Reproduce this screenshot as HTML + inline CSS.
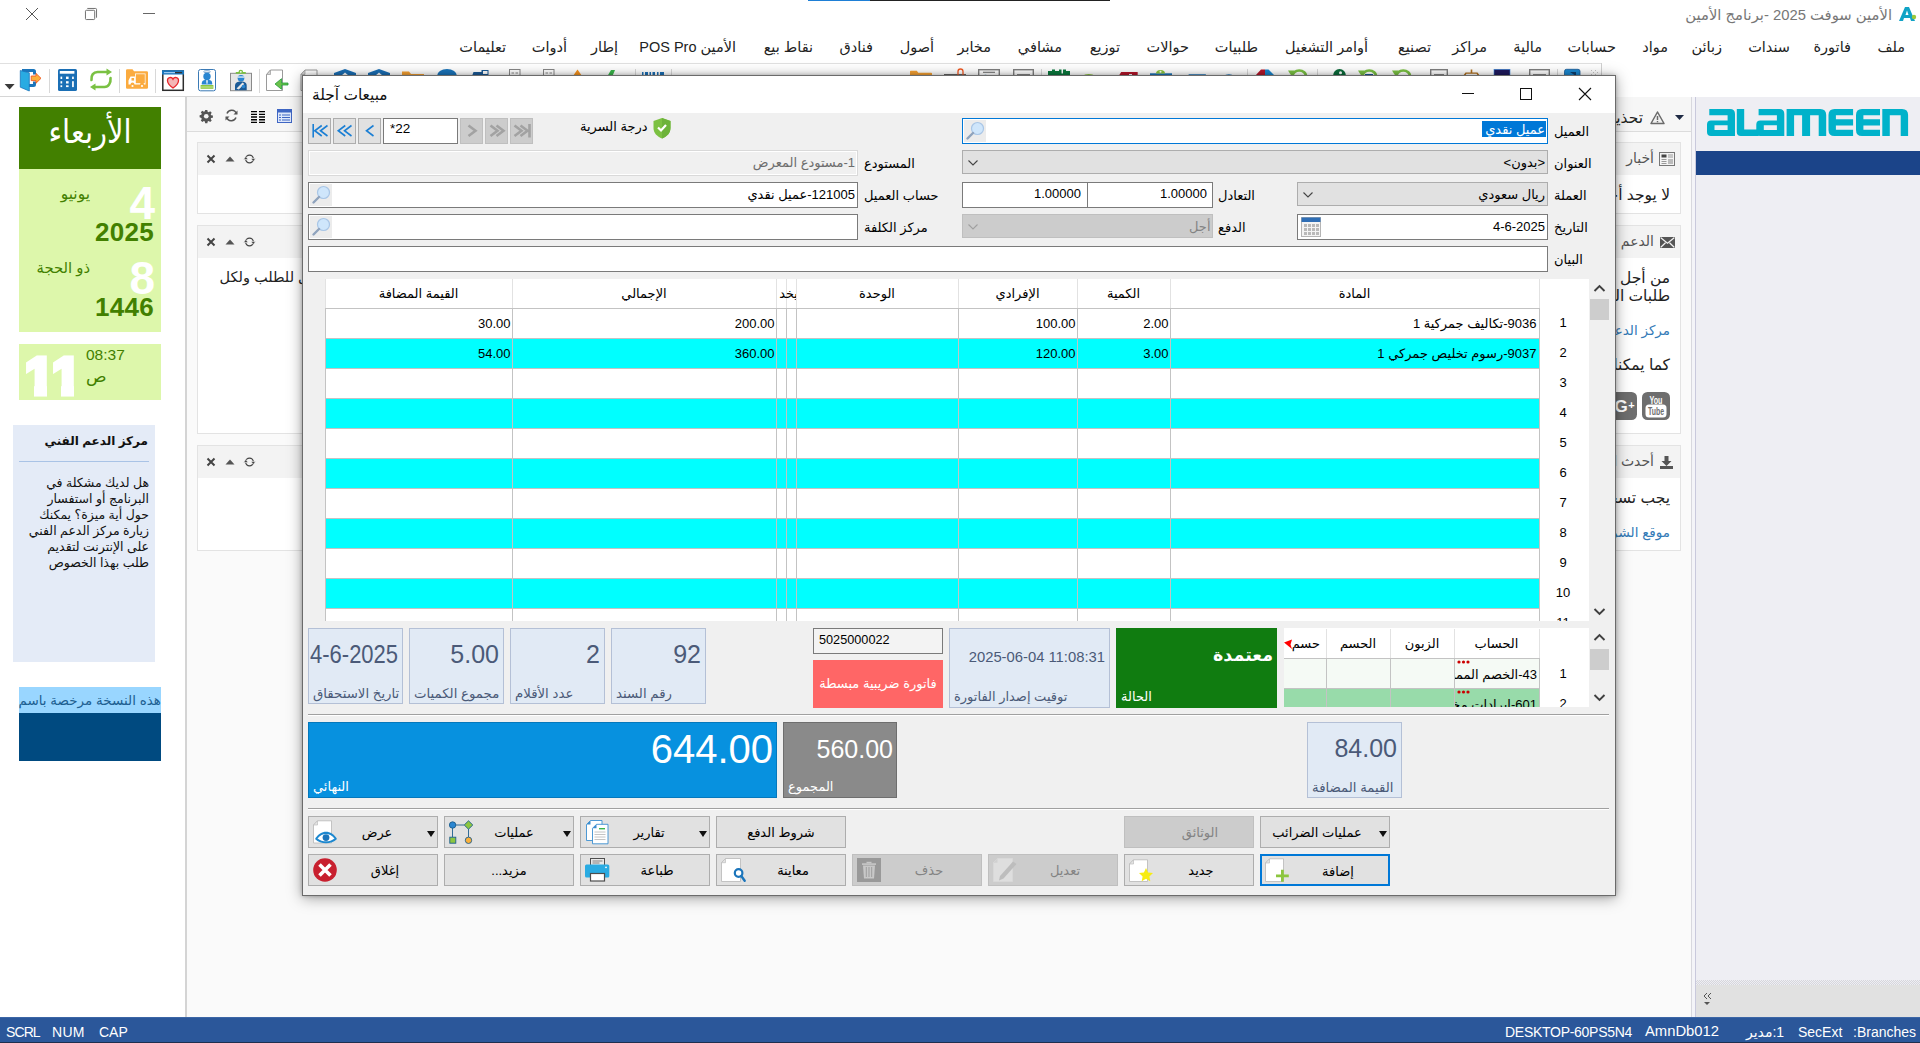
<!DOCTYPE html>
<html lang="ar">
<head>
<meta charset="utf-8">
<title>الأمين سوفت 2025 -برنامج الأمين</title>
<style>
*{box-sizing:border-box;margin:0;padding:0}
html,body{width:1920px;height:1043px;overflow:hidden;background:#fff}
body{position:relative;font-family:"Liberation Sans","DejaVu Sans",sans-serif;font-size:13px;color:#000}
.a{position:absolute}
.t{position:absolute;white-space:nowrap;line-height:1}
.r{direction:rtl;text-align:right}
.c{text-align:center}
svg{position:absolute;overflow:visible}
/* title + menu */
#title{left:0;top:0;width:1920px;height:30px;background:#fff}
#menu .t{font-size:14.5px;color:#222;top:40px;direction:rtl}
/* toolbar */
#tb{left:0;top:63px;width:1920px;height:35px;background:#fff;border-top:1px solid #e0e0e0;border-bottom:2px solid #d6d6d6}
.sep{position:absolute;top:69px;width:1px;height:24px;background:#d8d8d8}
/* left */
#left{left:0;top:97px;width:187px;height:921px;background:#fff;border-right:2px solid #d4d4d4}
/* center */
#center{left:187px;top:97px;width:1506px;height:921px;background:#fafafa}
.card{position:absolute;left:197px;width:1484px;background:#fff;border:1px solid #e3e3e3}
.card .h{position:absolute;left:0;top:0;right:0;height:32px;background:#f3f3f3}
/* right */
#right{left:1695px;top:97px;width:225px;height:921px;background:#eeeef3;border-left:1px solid #c9c9dc}
/* status */
#status{left:0;top:1017px;width:1920px;height:26px;background:#2b579a;border-top:1px solid #3c66a6}
#status .t{color:#fff;font-size:14px;top:7px}

#dlg{left:302px;top:75px;width:1314px;height:821px;background:#f0f0f0;border:1px solid #6b6b6b;box-shadow:0 2px 14px rgba(0,0,0,.36),0 0 4px rgba(0,0,0,.25)}
.in{position:absolute;background:#fff;border:1px solid #7a7a7a;height:26px}
.dis{position:absolute;background:#f0f0f0;border:1px solid #d9d9d9;box-shadow:inset 0 0 0 1px #fff;height:26px}
.cb{position:absolute;background:#e1e1e1;border:1px solid #adadad;height:24px}
.l{position:absolute;white-space:nowrap;line-height:1;font-size:13px;direction:rtl}
.v{position:absolute;white-space:nowrap;line-height:1;font-size:13px}
.btn{position:absolute;background:#e1e1e1;border:1px solid #adadad;height:32px;width:130px}
.btn .l{left:0;width:128px;text-align:center;top:9px;font-size:13px}
.btn.d{background:#cccccc;border-color:#bfbfbf}.btn.d .l{color:#838383}
.nb{position:absolute;top:118px;width:23px;height:26px;background:#e1e1e1;border:1px solid #adadad}
.nb.d{background:#cccccc;border-color:#bfbfbf}
.ib{position:absolute;background:#e1eaf5;border:1px solid #b4c0d6}
.gl{position:absolute;background:#c3c3c3;width:1px}
.hl{position:absolute;background:#c3c3c3;height:1px}

</style>
</head>
<body>
<!-- TITLE BAR -->
<div id="title" class="a">
  <div class="a" style="left:808px;top:0;width:62px;height:1px;background:#1e7fd6"></div>
  <div class="a" style="left:870px;top:0;width:240px;height:1px;background:#222"></div>
  <svg style="left:25px;top:7px" width="14" height="14" viewBox="0 0 14 14"><path d="M1 1L13 13M13 1L1 13" stroke="#555" stroke-width="1" fill="none"/></svg>
  <svg style="left:85px;top:8px" width="12" height="12" viewBox="0 0 13 13"><path d="M2.5 0.5h9a1 1 0 0 1 1 1v9M0.5 3.5a1 1 0 0 1 1-1h8a1 1 0 0 1 1 1v8a1 1 0 0 1-1 1h-8a1 1 0 0 1-1-1z" stroke="#666" stroke-width="1" fill="none"/></svg>
  <div class="a" style="left:143px;top:13px;width:12px;height:1px;background:#666"></div>
  <div class="t r" style="right:28px;top:8px;font-size:14.800px;color:#777">الأمين سوفت 2025 -برنامج الأمين</div>
  <svg style="left:1898px;top:6px" width="20" height="16" viewBox="0 0 20 16"><path d="M1 15L7 1h4l6 14h-4l-1-3H6l-1 3z" fill="#11a3c6"/><path d="M7.5 9h3L9 4.5z" fill="#fff"/><circle cx="16" cy="11" r="2.2" fill="#9bc83a"/></svg>
</div>
<!-- MENU BAR -->
<div id="menu">
  <div class="t" style="right:15px">ملف</div>
  <div class="t" style="right:69px">فاتورة</div>
  <div class="t" style="right:130px">سندات</div>
  <div class="t" style="right:198px">زبائن</div>
  <div class="t" style="right:252px">مواد</div>
  <div class="t" style="right:304px">حسابات</div>
  <div class="t" style="right:378px">مالية</div>
  <div class="t" style="right:433px">مراكز</div>
  <div class="t" style="right:489px">تصنيع</div>
  <div class="t" style="right:552px">أوامر التشغيل</div>
  <div class="t" style="right:662px">طلبيات</div>
  <div class="t" style="right:731px">حوالات</div>
  <div class="t" style="right:800px">توزيع</div>
  <div class="t" style="right:858px">مشافي</div>
  <div class="t" style="right:929px">مخابر</div>
  <div class="t" style="right:986px">أصول</div>
  <div class="t" style="right:1047px">فنادق</div>
  <div class="t" style="right:1107px">نقاط بيع</div>
  <div class="t" style="right:1184px">الأمين POS Pro</div>
  <div class="t" style="right:1302px">إطار</div>
  <div class="t" style="right:1353px">أدوات</div>
  <div class="t" style="right:1414px">تعليمات</div>
</div>
<!-- TOOLBAR -->
<div id="tb" class="a"></div>
<div class="a" style="left:1602px;top:62px;width:318px;height:36px;background:#fff"></div>
<div class="a" style="left:1601px;top:63px;width:1px;height:13px;background:#d0d0d0"></div>
<div class="sep" style="left:49px"></div><div class="sep" style="left:119px"></div><div class="sep" style="left:155px"></div><div class="sep" style="left:259px"></div>
<div class="sep" style="left:635px"></div><div class="sep" style="left:671px"></div><div class="sep" style="left:1041px"></div><div class="sep" style="left:1247px"></div><div class="sep" style="left:1317px"></div><div class="sep" style="left:1557px"></div>
<svg style="left:0;top:63px" width="1602" height="34" viewBox="0 63 1602 34">
<!-- dropdown -->
<path d="M4.600 84h10l-5 5.500z" fill="#3a3a3a"/>
<!-- door -->
<path d="M22 69h11.500a2.500 2.500 0 0 1 2.500 2.500v3h-3v-2.500h-8v12h8v-2.500h3v3a2.500 2.500 0 0 1-2.500 2.500h-11.500z" fill="#1b75bb"/>
<path d="M20.300 70.500l9 2.300v18.200l-9-3.800z" fill="#29abe2" stroke="#1b75bb" stroke-width=".8"/>
<path d="M31.200 76h4.800v-2.600l5 4.900-5 4.900v-2.600h-4.800z" fill="#fbb03b" stroke="#f15a24" stroke-width=".9"/>
<!-- calculator -->
<rect x="58" y="69" width="19" height="22" rx="1.600" fill="#1b6fb5"/>
<rect x="59.800" y="71" width="14.600" height="2.700" fill="#fff"/>
<g fill="#fff"><rect x="60.500" y="76.600" width="1.700" height="2.400"/><rect x="66" y="76.600" width="2.600" height="2.400"/><rect x="72.100" y="76.600" width="1.700" height="2.400"/><rect x="60.500" y="81.200" width="1.700" height="2.300"/><rect x="66" y="81.200" width="2.600" height="2.300"/><rect x="72.100" y="81.200" width="1.700" height="5.900"/><rect x="60.500" y="85.300" width="1.700" height="1.800"/><rect x="66" y="85.300" width="2.600" height="1.800"/></g>
<!-- refresh -->
<g fill="none" stroke="#7ac143" stroke-width="2.600" stroke-linecap="round"><path d="M91.500 80c-.5-5 2-8 6-8h10"/><path d="M110.500 78c.5 5-2 9-6 9h-10"/></g>
<path d="M106.500 68.500l5.500 3.500-5.500 3.500z" fill="#7ac143"/><path d="M95.500 83.500l-5.500 3.500 5.500 3.500z" fill="#7ac143"/>
<!-- folder truck -->
<path d="M126 70.500a1.200 1.200 0 0 1 1.200-1.200h5.300l1.500 2h12.800a1.200 1.200 0 0 1 1.200 1.200v15a1.200 1.200 0 0 1-1.200 1.200h-19.600a1.200 1.200 0 0 1-1.200-1.200z" fill="#fbab3f"/>
<path d="M128.500 84.500v-4l2-4h4.500v-3h10.500v11h-1.500a2 2 0 0 0-4 0h-5.500a2 2 0 0 0-4 0z" fill="#fff"/>
<rect x="135.800" y="74.200" width="9" height="9" fill="#fbab3f"/><rect x="131.500" y="78" width="2.600" height="2.600" fill="#fbab3f"/><path d="M129.300 84v-3.300l1.600-3.400h4v6.700z" fill="#fbab3f" opacity=".0"/>
<circle cx="132.500" cy="86" r="1.100" fill="#fff"/><circle cx="142" cy="86" r="1.100" fill="#fff"/>
<!-- heart window -->
<rect x="162.800" y="71" width="20.500" height="19.300" fill="#fff" stroke="#2d2d2d" stroke-width="1.500"/>
<rect x="162" y="70.200" width="22" height="4.300" fill="#1b75bb"/><rect x="164" y="72" width="11" height="1.200" fill="#9cc8ee"/><rect x="175" y="72" width="7" height="1.200" fill="#333"/>
<path d="M173 88c-3-2.200-5.500-4.500-5.500-7.300a2.900 2.900 0 0 1 5.500-1.500 2.900 2.900 0 0 1 5.500 1.500c0 2.800-2.500 5.100-5.500 7.300z" fill="#f4b6b6" stroke="#e8262b" stroke-width="1.300"/>
<!-- person badge -->
<rect x="198.500" y="69.500" width="17" height="21.300" rx="2" fill="#fff" stroke="#3b7ab5" stroke-width="1"/>
<ellipse cx="207" cy="71.700" rx="3.300" ry="1" fill="none" stroke="#3b7ab5" stroke-width=".7"/>
<circle cx="207" cy="76.500" r="3.700" fill="#2a86d1"/>
<path d="M201.800 84.600v-1.300c0-2.200 1.600-3.300 3.200-3.300h4c1.600 0 3.200 1.100 3.200 3.300v1.300z" fill="#2a86d1"/><path d="M206.200 80.200h1.600l-.3 3.600h-1z" fill="#fff"/>
<rect x="200.600" y="85" width="12.800" height="3.800" fill="#8cc63f"/><rect x="200.600" y="86.600" width="12.800" height=".8" fill="#d8efb5"/>
<!-- clipboard -->
<rect x="230.500" y="73.300" width="21" height="17.400" fill="#e6e6e6" stroke="#8a8a8a" stroke-width="1"/>
<path d="M235.800 73.700v-1.700h2.700a2.300 2.300 0 0 1 4.600 0h2.700v1.700z" fill="#7ac143"/><circle cx="240.800" cy="71.800" r=".9" fill="#fff"/>
<circle cx="241" cy="78.200" r="3.300" fill="#2a86d1"/><rect x="237.700" y="76.300" width="6.600" height="1.500" fill="#cfe3f5"/>
<path d="M235 90.300v-4.500c0-3 2.500-4.300 6-4.300s5.700 1.300 5.700 4.300v4.500z" fill="#1b5a96"/><path d="M236.500 88.500l6-6 1.800 1.500-5.500 5.500z" fill="#e6e6e6"/><circle cx="243.500" cy="86.500" r="1.800" fill="#2a86d1"/>
<!-- page + arrow -->
<path d="M270.500 70h12v20.500h-16v-16z" fill="#fff" stroke="#9a9a9a" stroke-width="1"/><path d="M270.500 70v4.500h-4z" fill="#d5d5d5" stroke="#9a9a9a" stroke-width=".7"/>
<path d="M275 84l6.500-5.300v4.300h6.500v2h-6.500v4.300z" fill="#6cc04a" stroke="#1f9d3a" stroke-width=".8"/>
<!-- next page (cut) -->
<path d="M305 70h12v20.500h-16v-16z" fill="#fff" stroke="#9a9a9a" stroke-width="1"/><path d="M305 70v4.500h-4z" fill="#d5d5d5" stroke="#9a9a9a" stroke-width=".7"/>
<!-- slivers above dialog -->
<path d="M334 76v-3l11-4 11 4v3z" fill="#1b6fb5"/><path d="M341 76l4-3.500 4 3.500z" fill="#fff"/>
<path d="M368 76v-3l11-4 11 4v3z" fill="#1b6fb5"/><path d="M375 76l4-3.500 4 3.500z" fill="#fff"/>
<path d="M402 76v-4.500h7l2 2.500h13v2z" fill="#f7a233"/>
<path d="M437 76a10 7 0 0 1 20 0z" fill="#1b75bb"/>
<path d="M472 76l1.500-4h8v-2h7v6z" fill="#1b5a96"/><rect x="483" y="71" width="4.500" height="3" fill="#fff"/>
<rect x="509.500" y="69.500" width="10.500" height="8" fill="#fff" stroke="#888" stroke-width="1"/><rect x="511.500" y="72.500" width="2.500" height="1" fill="#888"/><rect x="515.500" y="72.500" width="2.500" height="1" fill="#888"/>
<rect x="543.500" y="69.500" width="10.500" height="8" fill="#fff" stroke="#888" stroke-width="1"/><rect x="545.500" y="72.500" width="2.500" height="1" fill="#888"/><rect x="549.500" y="72.500" width="2.500" height="1" fill="#888"/>
<path d="M577.500 69.500l4.500 6.500h-9z" fill="#f7931e"/>
<path d="M611 70h4l-2.500 6h-5z" fill="#39b54a"/>
<g fill="#1b6fb5"><rect x="642" y="72" width="1.500" height="4"/><rect x="645" y="72" width="3" height="4"/><rect x="649.500" y="72" width="1.500" height="4"/><rect x="652.500" y="72" width="2.500" height="4"/><rect x="657" y="72" width="1.500" height="4"/><rect x="660" y="72" width="4" height="4"/></g>
<path d="M910 76v-4.500a.8 .8 0 0 1 .8-.8h6l1.500 2h12.900a.8 .8 0 0 1 .8 .8v2.500z" fill="#f7a233"/>
<rect x="944" y="74" width="22" height="2" fill="#666"/><path d="M958 76v-4.500a2.500 2.500 0 0 1 5 0v4.500" fill="none" stroke="#f15a24" stroke-width="1.300"/>
<rect x="978.700" y="69.700" width="20.600" height="8" fill="#fff" stroke="#808080" stroke-width="1.400"/><rect x="983" y="71.700" width="12" height="1.300" fill="#888"/><path d="M983 76a3 3 0 0 1 5 0z" fill="#1b75bb"/>
<rect x="1013.700" y="69.700" width="19.600" height="8" fill="#fff" stroke="#808080" stroke-width="1.400"/><rect x="1017" y="74" width="13" height="2" fill="#888"/>
<path d="M1048 76v-5h4v-1.500h3v1.500h4v-1.500h2.500v4h1.500v-4h3v1.500h4v5z" fill="#0b7a3e"/>
<path d="M1082.500 76a7 3.500 0 0 1 12.500 0z" fill="#8cc63f"/>
<path d="M1118.700 76l2.500-4h16.500v4z" fill="#b5172b"/><rect x="1129" y="74" width="3" height="2" fill="#fff"/>
<rect x="1150" y="73.300" width="22" height="3" fill="#1b75bb"/><path d="M1156 73.500a4.500 3.500 0 0 1 9 0z" fill="#8cc63f"/><circle cx="1160.500" cy="71.800" r="1" fill="#fff"/>
<path d="M1188 76l.8-1.800h17l.2 1.800z" fill="#1b75bb"/>
<path d="M1223.700 76a6 3.500 0 0 1 10.300 0z" fill="#1b75bb"/>
<path d="M1255 76l6-6.500h4v6.500z" fill="#b5172b"/><path d="M1265 69.500h3.500l6.500 6.500h-10z" fill="#1b87cf"/>
<path d="M1291 76a8 6.500 0 0 1 16.500 0h-3a5 4 0 0 0-10.500 0z" fill="#7ac143"/><path d="M1288 70.500l6.500 0-3 5.500z" fill="#7ac143"/>
<path d="M1333 76a6.500 7 0 0 1 13 0z" fill="#0b6b3a"/><circle cx="1340.500" cy="72.800" r="1.500" fill="#fff"/>
<path d="M1361 76a8 6.500 0 0 1 16.500 0h-3a5 4 0 0 0-10.500 0z" fill="#7ac143"/><path d="M1358 70.500l6.500 0-3 5.500z" fill="#7ac143"/><rect x="1365" y="74" width="8" height="2" fill="#1b5a96"/>
<path d="M1395 76a8 6.500 0 0 1 16.500 0h-3a5 4 0 0 0-10.500 0z" fill="#7ac143"/><path d="M1392 70.500l6.500 0-3 5.500z" fill="#7ac143"/>
<rect x="1430.700" y="69.700" width="16.600" height="8" fill="#fff" stroke="#808080" stroke-width="1.400"/><rect x="1434" y="74" width="10" height="2" fill="#888"/>
<path d="M1463 76l2.500-3.500h5.200v-3h1.600v3h5.200l2.500 3.500h-2l-1.500-2.300h-10l-1.500 2.300z" fill="#b0701f"/>
<rect x="1494" y="69.300" width="16" height="7" fill="#1f1a5e" stroke="#3c8de0" stroke-width=".6"/>
<rect x="1529.700" y="69.700" width="19.600" height="8" fill="#fff" stroke="#808080" stroke-width="1.400"/><rect x="1533" y="74" width="13" height="2" fill="#888"/>
<rect x="1564.500" y="69.300" width="15.500" height="8" rx="2" fill="#1b87cf" stroke="#1b5a96" stroke-width=".8"/><path d="M1570 72h6v4z" fill="#0d3e6e"/>
<g fill="#c4c4c4"><rect x="1591" y="70" width="1" height="1"/><rect x="1595" y="70" width="1" height="1"/><rect x="1593" y="72" width="1" height="1"/><rect x="1597" y="72" width="1" height="1"/><rect x="1591" y="74" width="1" height="1"/><rect x="1595" y="74" width="1" height="1"/></g>
</svg>

<!-- LEFT PANEL -->
<div id="left" class="a"></div>
<div class="a" style="left:19px;top:107px;width:142px;height:62px;background:#428000"></div>
<div class="t c" style="left:19px;top:118px;width:142px;font-size:29px;transform:scaleY(1.120);color:#fff;font-family:'Liberation Serif','DejaVu Serif','DejaVu Sans',serif;direction:rtl">الأربعاء</div>
<div class="a" style="left:19px;top:169px;width:142px;height:163px;background:#ddf7ab"></div>
<div class="t" style="right:1765px;top:180px;font-size:46px;font-weight:bold;color:#fff">4</div>
<div class="t r" style="right:1830px;top:186px;font-size:15.500px;color:#428000">يونيو</div>
<div class="t" style="right:1766px;top:219px;font-size:26px;font-weight:bold;color:#428000;letter-spacing:.3px">2025</div>
<div class="t" style="right:1765px;top:255px;font-size:46px;font-weight:bold;color:#fff">8</div>
<div class="t r" style="right:1830px;top:261px;font-size:14.800px;color:#428000">ذو الحجة</div>
<div class="t" style="right:1766px;top:294px;font-size:26px;font-weight:bold;color:#428000;letter-spacing:.3px">1446</div>
<div class="a" style="left:19px;top:344px;width:142px;height:56px;background:#ddf7ab"></div>
<div class="t" style="left:24.900px;top:349.600px;font-size:52px;font-weight:bold;color:#fff;letter-spacing:-1.800px;font-kerning:none;-webkit-text-stroke:5px #fff">11</div><div class="a" style="left:19px;top:385px;width:15px;height:13px;background:#ddf7ab"></div><div class="a" style="left:47px;top:385px;width:14px;height:13px;background:#ddf7ab"></div><div class="a" style="left:74px;top:385px;width:26px;height:13px;background:#ddf7ab"></div>
<div class="t" style="left:86px;top:347px;font-size:15.5px;color:#428000">08:37</div>
<div class="t r" style="left:86px;top:368px;font-size:17px;color:#428000">ص</div>
<div class="a" style="left:13px;top:425px;width:142px;height:237px;background:#e4ebf7"></div>
<div class="t r" style="right:1772px;top:435px;font-size:12px;font-weight:bold;color:#111">مركز الدعم الفني</div>
<div class="a" style="left:19px;top:461px;width:130px;height:1px;background:#a9c3e6"></div>
<div class="a r" style="left:19px;top:475px;width:130px;font-size:12.5px;line-height:16px;color:#111">هل لديك مشكلة في<br>البرنامج أو استفسار<br>حول أية ميزة؟ يمكنك<br>زيارة مركز الدعم الفني<br>على الإنترنت لتقديم<br>طلب بهذا الخصوص</div>
<div class="a" style="left:19px;top:687px;width:142px;height:26px;background:#99d6ff;overflow:hidden"><div class="t r" style="right:0px;top:7px;font-size:13.5px;color:#1d5f91">هذه النسخة مرخصة باسم</div></div>
<div class="a" style="left:19px;top:713px;width:142px;height:48px;background:#004a80"></div>

<!-- CENTER -->
<div id="center" class="a"></div>
<div class="a" style="left:187px;top:97px;width:1506px;height:35px;background:#f6f6f6;border-bottom:1px solid #dcdcdc"></div>

<!-- header icons -->
<svg style="left:200px;top:110px" width="12.500" height="12.500" viewBox="0 0 16 16"><path fill="#555" d="M6.600 0h2.800l.4 2.200 1.300.6 1.900-1.300 2 2-1.300 1.900.6 1.300 2.200.4v2.800l-2.200.4-.6 1.300 1.300 1.900-2 2-1.900-1.300-1.300.6-.4 2.200h-2.800l-.4-2.200-1.300-.6-1.900 1.300-2-2 1.300-1.900-.6-1.300L-.5 9.400v-2.800l2.200-.4.600-1.300L1 3l2-2 1.900 1.300 1.300-.6z"/><circle cx="8" cy="8" r="3" fill="#f6f6f6"/></svg>
<svg style="left:225px;top:109px" width="13" height="13" viewBox="0 0 13 13"><path d="M11.500 5A5 5 0 0 0 2 4.500M1.500 8A5 5 0 0 0 11 8.500" stroke="#555" stroke-width="1.500" fill="none"/><path d="M12.500 1.500v4h-4zM.5 11.500v-4h4z" fill="#555"/></svg>
<svg style="left:250.500px;top:110.500px" width="14" height="12" viewBox="0 0 14 12"><path d="M0 .6h6M8 .6h6M0 3.300h6M8 3.300h6M0 6h6M8 6h6M0 8.700h6M8 8.700h6M0 11.400h6M8 11.400h6" stroke="#000" stroke-width="1.350"/></svg>
<svg style="left:277px;top:109px" width="15" height="14" viewBox="0 0 15 14"><rect x=".5" y=".5" width="14" height="13" fill="#dfe8fb" stroke="#3f66c4"/><rect x=".5" y=".5" width="14" height="3" fill="#3f66c4"/><path d="M2 6h2M5 6h8M2 8.500h2M5 8.500h8M2 11h2M5 11h8" stroke="#3f66c4" stroke-width="1.200"/></svg>
<!-- cards -->
<div class="card" style="top:142px;height:72px"><div class="h"></div></div>
<div class="card" style="top:225px;height:209px"><div class="h"></div></div>
<div class="card" style="top:445px;height:106px"><div class="h"></div></div>
<div class="t r" style="left:219.500px;top:270px;font-size:14.500px;color:#222">أفضل للطلب ولكل</div>
<svg style="left:206px;top:154px" width="50" height="10" viewBox="0 0 50 10"><path d="M1.500 1.500l7 7M8.500 1.500l-7 7" stroke="#444" stroke-width="2"/><path d="M19.500 7.500l4.500-5 4.500 5z" fill="#555"/><circle cx="43.500" cy="5" r="3.800" fill="none" stroke="#444" stroke-width="1.300"/><path d="M37.500 5.500l2.300-3 2.300 3zM45 4.500l2.300 3 2.300-3z" fill="#444" stroke="#f3f3f3" stroke-width=".6"/></svg><svg style="left:206px;top:237px" width="50" height="10" viewBox="0 0 50 10"><path d="M1.500 1.500l7 7M8.500 1.500l-7 7" stroke="#444" stroke-width="2"/><path d="M19.500 7.500l4.500-5 4.500 5z" fill="#555"/><circle cx="43.500" cy="5" r="3.800" fill="none" stroke="#444" stroke-width="1.300"/><path d="M37.500 5.500l2.300-3 2.300 3zM45 4.500l2.300 3 2.300-3z" fill="#444" stroke="#f3f3f3" stroke-width=".6"/></svg><svg style="left:206px;top:457px" width="50" height="10" viewBox="0 0 50 10"><path d="M1.500 1.500l7 7M8.500 1.500l-7 7" stroke="#444" stroke-width="2"/><path d="M19.500 7.500l4.500-5 4.500 5z" fill="#555"/><circle cx="43.500" cy="5" r="3.800" fill="none" stroke="#444" stroke-width="1.300"/><path d="M37.500 5.500l2.300-3 2.300 3zM45 4.500l2.300 3 2.300-3z" fill="#444" stroke="#f3f3f3" stroke-width=".6"/></svg><div class="a" style="left:1660px;top:108px;width:0;height:0"></div>
<svg style="left:1675px;top:115px" width="9" height="5" viewBox="0 0 9 5"><path d="M0 0h9l-4.500 5z" fill="#1f2a44"/></svg>
<svg style="left:1650px;top:111px" width="15" height="13" viewBox="0 0 15 13"><path d="M7.500 1l6.500 11.500h-13z" fill="#f1f1f1" stroke="#6a6a6a" stroke-width="1.500" stroke-linejoin="round"/><path d="M7.500 5v4" stroke="#6a6a6a" stroke-width="1.500"/><rect x="6.800" y="10" width="1.400" height="1.300" fill="#6a6a6a"/></svg>
<div class="t r" style="right:277px;top:110px;font-size:15.5px;color:#222">تحذير</div>
<div class="a" style="left:1691px;top:97px;width:1px;height:921px;background:#d8d8de"></div>
<div class="a" style="left:1692px;top:97px;width:3px;height:921px;background:#f4f4f8"></div>
<!-- card contents (right side) -->
<svg style="left:1659px;top:152px" width="16" height="14" viewBox="0 0 16 14"><rect x=".5" y=".5" width="15" height="13" fill="#f3f3f3" stroke="#777" stroke-width="1"/><rect x="2.500" y="2.500" width="5" height="3" fill="#444"/><path d="M9 3h5M9 5h5M2.500 7.500h5M2.500 9.500h5M2.500 11.500h5" stroke="#999" stroke-width="1"/><rect x="9" y="7" width="5" height="5" fill="#bbb"/></svg>
<div class="t r" style="right:266px;top:151px;font-size:14px;color:#555">أخبار</div>
<div class="t r" style="right:250px;top:187px;font-size:15.500px;color:#222">لا يوجد أخبار جديدة</div>
<svg style="left:1660px;top:237px" width="15" height="11" viewBox="0 0 15 11"><rect width="15" height="11" rx="1" fill="#555"/><path d="M.8 .8l6.700 5.500 6.700-5.500M.8 10.200l4.700-4.500M14.200 10.200l-4.700-4.500" stroke="#f3f3f3" stroke-width="1.200" fill="none"/></svg>
<div class="t r" style="right:266px;top:234px;font-size:14px;color:#555">الدعم الفني</div>
<div class="t r" style="right:250px;top:270px;font-size:15.500px;color:#222">من أجل الحصول على</div>
<div class="t r" style="right:250px;top:288px;font-size:15.500px;color:#222">طلبات الدعم الفني</div>
<div class="t r" style="right:250px;top:324px;font-size:13.500px;color:#337ab7">مركز الدعم الفني</div>
<div class="t r" style="right:250px;top:357px;font-size:15.500px;color:#222">كما يمكنك متابعتنا</div>
<svg style="left:1642px;top:392px" width="28" height="28" viewBox="0 0 28 28"><rect width="28" height="28" rx="5.500" fill="#6e6e6e"/><rect x="3.500" y="12.500" width="21" height="13" rx="3.500" fill="#fff"/><text x="14" y="11.500" font-family="Liberation Sans, DejaVu Sans, sans-serif" font-size="11" font-weight="bold" fill="#fff" text-anchor="middle" textLength="13" lengthAdjust="spacingAndGlyphs">You</text><text x="14" y="23.300" font-family="Liberation Sans, DejaVu Sans, sans-serif" font-size="11" font-weight="bold" fill="#6e6e6e" text-anchor="middle" textLength="16" lengthAdjust="spacingAndGlyphs">Tube</text></svg>
<svg style="left:1609px;top:392px" width="28" height="28" viewBox="0 0 28 28"><rect width="28" height="28" rx="5.500" fill="#6e6e6e"/><text x="12" y="20" font-family="Liberation Sans, DejaVu Sans, sans-serif" font-size="17" font-weight="bold" fill="#fff" text-anchor="middle">G</text><text x="22.500" y="17" font-family="Liberation Sans, DejaVu Sans, sans-serif" font-size="11" font-weight="bold" fill="#fff" text-anchor="middle">+</text></svg>
<svg style="left:1660px;top:456px" width="13" height="13" viewBox="0 0 13 13"><path d="M4.500 0h4v5h3l-5 5-5-5h3z" fill="#555"/><rect x="0" y="10" width="13" height="3" fill="#555"/></svg>
<div class="t r" style="right:266px;top:454px;font-size:14px;color:#555">أحدث الإصدارات</div>
<div class="t r" style="right:250px;top:490px;font-size:15.500px;color:#222">يجب تسجيل الدخول</div>
<div class="t r" style="right:250px;top:526px;font-size:13.500px;color:#337ab7">موقع الشركة</div>

<!-- RIGHT -->
<div id="right" class="a"></div>
<div class="a" style="left:1696px;top:151px;width:224px;height:24px;background:#1b4489"></div>
<svg style="left:1707px;top:108.600px" width="202" height="28" viewBox="0 0 202 28"><g fill="#00b2ca"><path fill-rule="evenodd" d="M2.3 0H23Q28 0 28 5V27.100H4Q0 27.100 0 23.100V15.500Q0 11.500 4 11.500H20.6V6.300H2.3ZM7.5 16.300H20.6V21H7.5Z"/><path d="M29.800 0H37.200V20.600H51.600V27.100H33.800Q29.800 27.100 29.800 23.100Z"/><path fill-rule="evenodd" d="M51.599999999999994 0H72.3Q77.3 0 77.3 5V27.100H53.3Q49.3 27.100 49.3 23.100V15.500Q49.3 11.500 53.3 11.500H69.9V6.300H51.599999999999994ZM56.8 16.300H69.9V21H56.8Z"/><path d="M79.600 0H113.200Q119.200 0 119.200 6V27.100H111.700V6.300H103.100V27.100H95.100V6.300H87.100V27.100H79.600Z"/><path d="M146.1 0H127.5Q121.5 0 121.5 6V21.100Q121.5 27.100 127.5 27.100H146.1V20.800H128.9V16.600H146.1V10.300H128.9V6.300H146.1Z"/><path d="M173 0H155Q149 0 149 6V21.100Q149 27.100 155 27.100H173V20.800H156.4V16.600H173V10.300H156.4V6.300H173Z"/><path d="M175.300 0H195.100Q201.100 0 201.100 6V27.100H193.700V6.300H182.800V27.100H175.300Z"/></g></svg>
<div class="a" style="left:1696px;top:980px;width:224px;height:5px;background:repeating-conic-gradient(#d6d6dc 0% 25%,#eeeef3 0% 50%) 0 0/2px 2px"></div>
<div class="a" style="left:1696px;top:985px;width:224px;height:33px;background:#e1e1e1"></div>
<svg style="left:1703px;top:992px" width="9" height="14" viewBox="0 0 9 14"><path d="M4 1L1 4L4 7M8 1L5 4L8 7" stroke="#555" stroke-width="1" fill="none"/><path d="M1 10h6l-3 3z" fill="#555"/></svg>

<!-- STATUS -->
<div id="status" class="a">
  <div class="t" style="left:6px;letter-spacing:-.9px">SCRL</div>
  <div class="t" style="left:52px;letter-spacing:.3px">NUM</div>
  <div class="t" style="left:99px">CAP</div>
  <div class="t" style="left:1505px;letter-spacing:-.28px">DESKTOP-60PS5N4</div>
  <div class="t" style="left:1645px;font-size:14.800px;top:6px">AmnDb012</div>
  <div class="t" style="left:1746px;direction:rtl">1:مدير</div>
  <div class="t" style="left:1798px">SecExt</div>
  <div class="t" style="left:1853px">:Branches</div>
</div>
<div class="a" style="left:0;top:1042px;width:1920px;height:1px;background:#1d2f4f"></div>
<div id="dlg" class="a"></div>
<div class="a" style="left:303px;top:76px;width:1312px;height:37px;background:#fff"></div>
<div class="l" style="left:312px;top:87px;font-size:15.400px;color:#111">مبيعات آجلة</div>
<div class="a" style="left:1462px;top:93px;width:12px;height:1px;background:#111"></div>
<div class="a" style="left:1520px;top:88px;width:12px;height:12px;border:1px solid #111"></div>
<svg style="left:1579px;top:88px" width="12" height="12" viewBox="0 0 12 12"><path d="M0 0L12 12M12 0L0 12" stroke="#111" stroke-width="1.1" fill="none"/></svg>
<div class="l" style="left:1554px;top:125px">العميل</div>
<div class="in" style="left:962px;top:118px;width:586px;border-color:#0078d7"></div>
<div class="a" style="left:1482px;top:121px;width:64px;height:16px;background:#0078d7"></div>
<div class="l" style="right:375px;top:123px;color:#fff">عميل نقدي</div>
<svg style="left:964px;top:120px" width="22" height="22" viewBox="0 0 22 22"><rect width="22" height="22" fill="#ececec"/><circle cx="13.500" cy="8.500" r="6" fill="#cfe6fb" stroke="#a9c6e6" stroke-width="1.200"/><path d="M9 13L3.500 18.500" stroke="#8fa3bd" stroke-width="2.400" stroke-linecap="round"/></svg>
<div class="nb" style="left:308px"><svg style="left:-1px;top:-1px" width="23" height="26" viewBox="0 0 23 26"><path d="M5.200 6v13.500M13.75 7.500L6.75 12.750L13.75 18M19.5 7.500L12.5 12.750L19.5 18" stroke="#1b7fd4" stroke-width="1.6" fill="none"/></svg></div>
<div class="nb" style="left:333px"><svg style="left:-1px;top:-1px" width="23" height="26" viewBox="0 0 23 26"><path d="M12.25 7.500L5.25 12.750L12.25 18M18.5 7.500L11.5 12.750L18.5 18" stroke="#1b7fd4" stroke-width="1.6" fill="none"/></svg></div>
<div class="nb" style="left:358px"><svg style="left:-1px;top:-1px" width="23" height="26" viewBox="0 0 23 26"><path d="M15.5 7.500L8.5 12.750L15.5 18" stroke="#1b7fd4" stroke-width="1.6" fill="none"/></svg></div>
<div class="in" style="left:383px;top:118px;width:75px"></div>
<div class="v" style="left:390px;top:122px;font-size:13.500px">*22</div>
<div class="nb d" style="left:460px"><svg style="left:-1px;top:-1px" width="23" height="26" viewBox="0 0 23 26"><path d="M8.5 7.500L15.5 12.750L8.5 18" stroke="#a2a2a2" stroke-width="2.6" fill="none"/></svg></div>
<div class="nb d" style="left:485px"><svg style="left:-1px;top:-1px" width="23" height="26" viewBox="0 0 23 26"><path d="M5.5 7.500L12.5 12.750L5.5 18M11.5 7.500L18.5 12.750L11.5 18" stroke="#a2a2a2" stroke-width="2.6" fill="none"/></svg></div>
<div class="nb d" style="left:510px"><svg style="left:-1px;top:-1px" width="23" height="26" viewBox="0 0 23 26"><path d="M4.5 7.500L11.5 12.750L4.5 18M10.5 7.500L17.5 12.750L10.5 18M19.500 6v13.500" stroke="#a2a2a2" stroke-width="2.6" fill="none"/></svg></div>
<div class="l" style="left:580px;top:120px">درجة السرية</div>
<svg style="left:653px;top:118px" width="18" height="21" viewBox="0 0 18 21"><path d="M9 0L17.500 3v7c0 5-3.500 8.500-8.500 10.500C4 18.500.5 15 .5 10V3z" fill="#7cc142"/><path d="M9 0L17.500 3v7c0 5-3.500 8.500-8.500 10.500z" fill="#6db33a"/><path d="M5 9.500l3 3 5-5.500" stroke="#fff" stroke-width="2.200" fill="none"/></svg>
<div class="l" style="left:1554px;top:157px">العنوان</div>
<div class="cb" style="left:962px;top:150px;width:586px"></div>
<div class="l" style="right:375px;top:156px">&lt;بدون&gt;</div>
<svg style="left:968px;top:160px" width="10" height="6" viewBox="0 0 10 6"><path d="M.5 .5L5 5L9.500 .5" stroke="#444" stroke-width="1.100" fill="none"/></svg>
<div class="l" style="left:864px;top:157px">المستودع</div>
<div class="dis" style="left:308px;top:150px;width:550px"></div>
<div class="l" style="right:1065px;top:156px;color:#6d6d6d">1-مستودع المعرض</div>
<div class="l" style="left:1554px;top:189px">العملة</div>
<div class="cb" style="left:1297px;top:182px;width:251px"></div>
<div class="l" style="right:375px;top:188px">ريال سعودي</div>
<svg style="left:1303px;top:192px" width="10" height="6" viewBox="0 0 10 6"><path d="M.5 .5L5 5L9.500 .5" stroke="#444" stroke-width="1.100" fill="none"/></svg>
<div class="l" style="left:1218px;top:189px">التعادل</div>
<div class="in" style="left:1087px;top:182px;width:126px"></div>
<div class="v" style="right:713px;top:187px">1.00000</div>
<div class="in" style="left:962px;top:182px;width:126px"></div>
<div class="v" style="right:839px;top:187px">1.00000</div>
<div class="l" style="left:864px;top:189px">حساب العميل</div>
<div class="in" style="left:308px;top:182px;width:550px"></div>
<div class="l" style="right:1065px;top:188px">121005-عميل نقدي</div>
<svg style="left:310px;top:184px" width="22" height="22" viewBox="0 0 22 22"><rect width="22" height="22" fill="#ececec"/><circle cx="13.500" cy="8.500" r="6" fill="#cfe6fb" stroke="#a9c6e6" stroke-width="1.200"/><path d="M9 13L3.500 18.500" stroke="#8fa3bd" stroke-width="2.400" stroke-linecap="round"/></svg>
<div class="l" style="left:1554px;top:221px">التاريخ</div>
<div class="in" style="left:1297px;top:214px;width:251px"></div>
<div class="v" style="right:375px;top:220px">4-6-2025</div>
<svg style="left:1301px;top:217px" width="20" height="20" viewBox="0 0 20 20"><rect x=".5" y=".5" width="19" height="19" fill="#f4f4f4" stroke="#b5b5b5"/><rect x=".5" y=".5" width="19" height="4.500" fill="#2f6eb5"/><g fill="#b9b9b9"><rect x="3" y="7" width="3" height="3"/><rect x="7" y="7" width="3" height="3"/><rect x="11" y="7" width="3" height="3"/><rect x="15" y="7" width="3" height="3"/><rect x="3" y="11" width="3" height="3"/><rect x="7" y="11" width="3" height="3"/><rect x="11" y="11" width="3" height="3"/><rect x="15" y="11" width="3" height="3"/><rect x="3" y="15" width="3" height="3"/><rect x="7" y="15" width="3" height="3"/><rect x="11" y="15" width="3" height="3"/><rect x="15" y="15" width="3" height="3"/></g></svg>
<div class="l" style="left:1218px;top:221px">الدفع</div>
<div class="cb" style="left:962px;top:214px;width:251px;background:#cccccc;border-color:#bfbfbf"></div>
<div class="l" style="right:709.500px;top:220px;color:#838383">أجل</div>
<svg style="left:968px;top:224px" width="10" height="6" viewBox="0 0 10 6"><path d="M.5 .5L5 5L9.500 .5" stroke="#a0a0a0" stroke-width="1.100" fill="none"/></svg>
<div class="l" style="left:864px;top:221px">مركز الكلفة</div>
<div class="in" style="left:308px;top:214px;width:550px"></div>
<svg style="left:310px;top:216px" width="22" height="22" viewBox="0 0 22 22"><rect width="22" height="22" fill="#ececec"/><circle cx="13.500" cy="8.500" r="6" fill="#cfe6fb" stroke="#a9c6e6" stroke-width="1.200"/><path d="M9 13L3.500 18.500" stroke="#8fa3bd" stroke-width="2.400" stroke-linecap="round"/></svg>
<div class="l" style="left:1554px;top:253px">البيان</div>
<div class="in" style="left:308px;top:246px;width:1240px"></div>
<div class="a" style="left:325px;top:279px;width:1264px;height:342px;background:#fff;overflow:hidden">
<div class="a" style="left:0;top:60px;width:1215px;height:30px;background:#00ffff"></div>
<div class="a" style="left:0;top:120px;width:1215px;height:30px;background:#00ffff"></div>
<div class="a" style="left:0;top:180px;width:1215px;height:30px;background:#00ffff"></div>
<div class="a" style="left:0;top:240px;width:1215px;height:30px;background:#00ffff"></div>
<div class="a" style="left:0;top:300px;width:1215px;height:30px;background:#00ffff"></div>
<div class="hl" style="left:0;top:29px;width:1215px"></div>
<div class="hl" style="left:0;top:59px;width:1215px"></div>
<div class="hl" style="left:0;top:89px;width:1215px"></div>
<div class="hl" style="left:0;top:119px;width:1215px"></div>
<div class="hl" style="left:0;top:149px;width:1215px"></div>
<div class="hl" style="left:0;top:179px;width:1215px"></div>
<div class="hl" style="left:0;top:209px;width:1215px"></div>
<div class="hl" style="left:0;top:239px;width:1215px"></div>
<div class="hl" style="left:0;top:269px;width:1215px"></div>
<div class="hl" style="left:0;top:299px;width:1215px"></div>
<div class="hl" style="left:0;top:329px;width:1215px"></div>
<div class="hl" style="left:0;top:359px;width:1215px"></div>
<div class="gl" style="left:0px;top:0;height:30px;background:#e2e2e2"></div>
<div class="gl" style="left:0px;top:29px;height:320px"></div>
<div class="gl" style="left:187px;top:0;height:30px;background:#e2e2e2"></div>
<div class="gl" style="left:187px;top:29px;height:320px"></div>
<div class="gl" style="left:451px;top:0;height:30px;background:#e2e2e2"></div>
<div class="gl" style="left:451px;top:29px;height:320px"></div>
<div class="gl" style="left:461px;top:0;height:30px;background:#e2e2e2"></div>
<div class="gl" style="left:461px;top:29px;height:320px"></div>
<div class="gl" style="left:471px;top:0;height:30px;background:#e2e2e2"></div>
<div class="gl" style="left:471px;top:29px;height:320px"></div>
<div class="gl" style="left:633px;top:0;height:30px;background:#e2e2e2"></div>
<div class="gl" style="left:633px;top:29px;height:320px"></div>
<div class="gl" style="left:752px;top:0;height:30px;background:#e2e2e2"></div>
<div class="gl" style="left:752px;top:29px;height:320px"></div>
<div class="gl" style="left:845px;top:0;height:30px;background:#e2e2e2"></div>
<div class="gl" style="left:845px;top:29px;height:320px"></div>
<div class="gl" style="left:1214px;top:0;height:30px;background:#e2e2e2"></div>
<div class="gl" style="left:1214px;top:29px;height:320px"></div>
<div class="l c" style="left:845px;width:369px;top:8px">المادة</div>
<div class="l c" style="left:752px;width:93px;top:8px">الكمية</div>
<div class="l c" style="left:633px;width:119px;top:8px">الإفرادي</div>
<div class="l c" style="left:471px;width:162px;top:8px">الوحدة</div>
<div class="a" style="left:452px;top:0;width:19px;height:29px;overflow:hidden"><div class="l" style="right:-2px;top:8px">يخد</div></div>
<div class="l c" style="left:187px;width:264px;top:8px">الإجمالي</div>
<div class="l c" style="left:0px;width:187px;top:8px">القيمة المضافة</div>
<div class="v c" style="left:1215px;width:46px;top:37px">1</div>
<div class="v c" style="left:1215px;width:46px;top:67px">2</div>
<div class="v c" style="left:1215px;width:46px;top:97px">3</div>
<div class="v c" style="left:1215px;width:46px;top:127px">4</div>
<div class="v c" style="left:1215px;width:46px;top:157px">5</div>
<div class="v c" style="left:1215px;width:46px;top:187px">6</div>
<div class="v c" style="left:1215px;width:46px;top:217px">7</div>
<div class="v c" style="left:1215px;width:46px;top:247px">8</div>
<div class="v c" style="left:1215px;width:46px;top:277px">9</div>
<div class="v c" style="left:1215px;width:46px;top:307px">10</div>
<div class="v c" style="left:1215px;width:46px;top:337px">11</div>
<div class="l" style="right:52.5px;top:38px">9036-تكاليف جمركية 1</div>
<div class="l" style="right:52.5px;top:68px">9037-رسوم تخليص جمركي 1</div>
<div class="v" style="right:420.5px;top:38px">2.00</div>
<div class="v" style="right:420.5px;top:68px">3.00</div>
<div class="v" style="right:513.5px;top:38px">100.00</div>
<div class="v" style="right:513.5px;top:68px">120.00</div>
<div class="v" style="right:814.5px;top:38px">200.00</div>
<div class="v" style="right:814.5px;top:68px">360.00</div>
<div class="v" style="right:1078.5px;top:38px">30.00</div>
<div class="v" style="right:1078.5px;top:68px">54.00</div>
</div>
<div class="a" style="left:1589px;top:279px;width:20px;height:342px;background:#f0f0f0"></div>
<svg style="left:1594px;top:285px" width="11" height="7" viewBox="0 0 11 7"><path d="M.5 6L5.500 1L10.500 6" stroke="#404040" stroke-width="1.900" fill="none"/></svg>
<svg style="left:1594px;top:608px" width="11" height="7" viewBox="0 0 11 7"><path d="M.5 1L5.500 6L10.500 1" stroke="#404040" stroke-width="1.900" fill="none"/></svg>
<div class="a" style="left:1590px;top:299px;width:19px;height:21px;background:#cdcdcd"></div>
<div class="ib" style="left:308px;top:628px;width:95px;height:76px;overflow:hidden"><div class="v" style="right:4px;top:13px;font-size:25px;color:#4b5a78;transform:scaleX(0.88);transform-origin:100% 50%">4-6-2025</div><div class="l" style="left:4px;top:58px;font-size:13.300px;color:#4b5a78">تاريخ الاستحقاق</div></div>
<div class="ib" style="left:409px;top:628px;width:95px;height:76px;overflow:hidden"><div class="v" style="right:4px;top:13px;font-size:25px;color:#4b5a78;transform:scaleX(1);transform-origin:100% 50%">5.00</div><div class="l" style="left:4px;top:58px;font-size:13.300px;color:#4b5a78">مجموع الكميات</div></div>
<div class="ib" style="left:510px;top:628px;width:95px;height:76px;overflow:hidden"><div class="v" style="right:4px;top:13px;font-size:25px;color:#4b5a78;transform:scaleX(1);transform-origin:100% 50%">2</div><div class="l" style="left:4px;top:58px;font-size:13.300px;color:#4b5a78">عدد الأقلام</div></div>
<div class="ib" style="left:611px;top:628px;width:95px;height:76px;overflow:hidden"><div class="v" style="right:4px;top:13px;font-size:25px;color:#4b5a78;transform:scaleX(1);transform-origin:100% 50%">92</div><div class="l" style="left:4px;top:58px;font-size:13.300px;color:#4b5a78">رقم السند</div></div>
<div class="in" style="left:813px;top:628px;width:130px;height:26px;background:#f3f3f3"></div>
<div class="v" style="left:819px;top:634px;font-size:12.700px">5025000022</div>
<div class="a" style="left:813px;top:660px;width:130px;height:48px;background:#ff6666"></div>
<div class="l c" style="left:813px;width:130px;top:677px;color:#fff">فاتورة ضريبية مبسطة</div>
<div class="ib" style="left:949px;top:628px;width:161px;height:80px"></div>
<div class="v" style="right:815px;top:650px;font-size:14.800px;color:#4b5a78">2025-06-04 11:08:31</div>
<div class="l" style="left:954px;top:690px;color:#4b5a78">توقيت إصدار الفاتورة</div>
<div class="a" style="left:1116px;top:628px;width:161px;height:80px;background:#107c10"></div>
<div class="l" style="right:647px;top:647px;font-size:17.5px;font-weight:bold;color:#fff">معتمدة</div>
<div class="l" style="left:1121px;top:690px;color:#fff">الحالة</div>
<div class="a" style="left:1284px;top:628px;width:305px;height:79px;background:#fff;overflow:hidden"><div class="a" style="left:0;top:1px;width:305px;height:78px">
<div class="a" style="left:0;top:30px;width:256px;height:30px;background:#f5faf5"></div>
<div class="a" style="left:0;top:60px;width:256px;height:30px;background:#98dbaa"></div>
<div class="hl" style="left:0;top:29px;width:256px"></div>
<div class="hl" style="left:0;top:59px;width:256px"></div>
<div class="gl" style="left:42px;top:0;height:30px;background:#e2e2e2"></div>
<div class="gl" style="left:42px;top:29px;height:60px"></div>
<div class="gl" style="left:106px;top:0;height:30px;background:#e2e2e2"></div>
<div class="gl" style="left:106px;top:29px;height:60px"></div>
<div class="gl" style="left:170px;top:0;height:30px;background:#e2e2e2"></div>
<div class="gl" style="left:170px;top:29px;height:60px"></div>
<div class="gl" style="left:255px;top:0;height:30px;background:#e2e2e2"></div>
<div class="gl" style="left:255px;top:29px;height:60px"></div>
<div class="l c" style="left:170px;width:85px;top:8px">الحساب</div>
<div class="l c" style="left:106px;width:64px;top:8px">الزبون</div>
<div class="l c" style="left:42px;width:64px;top:8px">الحسم</div>
<div class="a" style="left:0;top:0;width:42px;height:29px;overflow:hidden"><div class="l" style="right:6px;top:8px">حسم</div></div>
<svg style="left:0px;top:10px" width="9" height="11" viewBox="0 0 9 11"><path d="M0 3.500L8 .5l-1.500 5 1.500 4.500z" fill="#f00"/></svg>
<div class="a" style="left:171px;top:30px;width:84px;height:60px;overflow:hidden"><div class="l" style="right:2px;top:9px">43-الخصم الممنوح</div><div class="l" style="right:2px;top:39px">601-ايرادات مختلفة</div>
<svg style="left:2px;top:1px" width="14" height="4" viewBox="0 0 14 4"><circle cx="2" cy="2" r="1.600" fill="#c00"/><circle cx="6.500" cy="2" r="1.600" fill="#c00"/><circle cx="11" cy="2" r="1.600" fill="#c00"/></svg>
<svg style="left:2px;top:31px" width="14" height="4" viewBox="0 0 14 4"><circle cx="2" cy="2" r="1.600" fill="#c00"/><circle cx="6.500" cy="2" r="1.600" fill="#c00"/><circle cx="11" cy="2" r="1.600" fill="#c00"/></svg></div>
<div class="v c" style="left:256px;width:46px;top:38px">1</div>
<div class="v c" style="left:256px;width:46px;top:68px">2</div>
</div></div>
<div class="a" style="left:1589px;top:628px;width:20px;height:79px;background:#f0f0f0"></div>
<svg style="left:1594px;top:634px" width="11" height="7" viewBox="0 0 11 7"><path d="M.5 6L5.500 1L10.500 6" stroke="#404040" stroke-width="1.900" fill="none"/></svg>
<svg style="left:1594px;top:694px" width="11" height="7" viewBox="0 0 11 7"><path d="M.5 1L5.500 6L10.500 1" stroke="#404040" stroke-width="1.900" fill="none"/></svg>
<div class="a" style="left:1590px;top:649px;width:19px;height:21px;background:#cdcdcd"></div>
<div class="a" style="left:308px;top:714px;width:1301px;height:1px;background:#a0a0a0"></div>
<div class="a" style="left:308px;top:715px;width:1301px;height:1px;background:#fff"></div>
<div class="a" style="left:308px;top:808px;width:1301px;height:1px;background:#a0a0a0"></div>
<div class="a" style="left:308px;top:809px;width:1301px;height:1px;background:#fff"></div>
<div class="a" style="left:308px;top:722px;width:469px;height:76px;background:#0791df;border:1px solid #0578bc"></div>
<div class="v" style="right:1147px;top:729px;font-size:40px;color:#fff">644.00</div>
<div class="l" style="left:313px;top:780px;color:#fff">النهائي</div>
<div class="a" style="left:783px;top:722px;width:114px;height:76px;background:#8a8a8a;border:1px solid #6e6e6e"></div>
<div class="v" style="right:1027px;top:737px;font-size:25px;color:#fff">560.00</div>
<div class="l" style="left:788px;top:780px;color:#fff">المجموع</div>
<div class="ib" style="left:1307px;top:722px;width:95px;height:76px;overflow:hidden"><div class="v" style="right:4px;top:13px;font-size:25px;color:#4b5a78;transform:scaleX(1);transform-origin:100% 50%">84.00</div><div class="l" style="left:4px;top:58px;font-size:13.300px;color:#4b5a78">القيمة المضافة</div></div>
<div class="btn" style="left:308px;top:816px;"><div class="l" style="left:4px">عرض</div><div class="a" style="right:2.500px;top:14px;width:0;height:0;border-left:4px solid transparent;border-right:4px solid transparent;border-top:6px solid #111"></div></div>
<div class="btn" style="left:444px;top:816px;"><div class="l" style="left:5px">عمليات</div><div class="a" style="right:2.500px;top:14px;width:0;height:0;border-left:4px solid transparent;border-right:4px solid transparent;border-top:6px solid #111"></div></div>
<div class="btn" style="left:580px;top:816px;"><div class="l" style="left:4px">تقارير</div><div class="a" style="right:2.500px;top:14px;width:0;height:0;border-left:4px solid transparent;border-right:4px solid transparent;border-top:6px solid #111"></div></div>
<div class="btn" style="left:716px;top:816px;"><div class="l" style="left:0px">شروط الدفع</div></div>
<div class="btn d" style="left:1124px;top:816px;"><div class="l" style="left:11px">الوثائق</div></div>
<div class="btn" style="left:1260px;top:816px;"><div class="l" style="left:-8px">عمليات الضرائب</div><div class="a" style="right:2.500px;top:14px;width:0;height:0;border-left:4px solid transparent;border-right:4px solid transparent;border-top:6px solid #111"></div></div>
<div class="btn" style="left:308px;top:854px;"><div class="l" style="left:12px">إغلاق</div></div>
<div class="btn" style="left:444px;top:854px;"><div class="l" style="left:0px">مزيد...</div></div>
<div class="btn" style="left:580px;top:854px;"><div class="l" style="left:12px">طباعة</div></div>
<div class="btn" style="left:716px;top:854px;"><div class="l" style="left:12px">معاينة</div></div>
<div class="btn d" style="left:852px;top:854px;"><div class="l" style="left:12px">حذف</div></div>
<div class="btn d" style="left:988px;top:854px;"><div class="l" style="left:12px">تعديل</div></div>
<div class="btn" style="left:1124px;top:854px;"><div class="l" style="left:12px">جديد</div></div>
<div class="btn" style="left:1260px;top:854px;border:2px solid #0078d7;"><div class="l" style="left:12px">إضافة</div></div>
<svg style="left:0;top:0" width="1920" height="1043" viewBox="0 0 1920 1043">
<!-- view (eye) -->
<path d="M317.500 820.800h14v22.200h-18v-18z" fill="#fff" stroke="#bdbdbd" stroke-width=".9"/><path d="M317.500 820.800v4.200h-4z" fill="#e4e4e4" stroke="#bdbdbd" stroke-width=".7"/>
<path d="M315 839c3-4.800 7-7.200 11-7.200s8 2.400 11 7.200c-3 3-7 4.200-11 4.200s-8-1.200-11-4.200z" fill="#1b87cf"/><path d="M317.500 838.500c2.500-3 5.500-4.400 8.500-4.400s6 1.400 8.500 4.400c-2.500 2-5.500 2.800-8.500 2.800s-6-.8-8.500-2.800z" fill="#fff"/><circle cx="326" cy="837.600" r="3.400" fill="#1b75bb"/>
<!-- operations -->
<g stroke="#1d5f8f" stroke-width=".9"><path d="M455 825h9M452.500 828v9M468.500 829v8" fill="none"/><circle cx="452.600" cy="825" r="3.200" fill="#2a86d1"/><path d="M468.500 820.800l4.300 4.200-4.300 4.200-4.300-4.200z" fill="#8cc63f"/><rect x="449.800" y="837.200" width="6" height="6" fill="#8cc63f"/><circle cx="468.500" cy="840.300" r="3.200" fill="#fbb03b"/></g>
<!-- reports -->
<path d="M590.500 820.500h11.500v20h-15.500v-16z" fill="#fff" stroke="#3b8ed0" stroke-width=".9"/><path d="M590.500 820.500v4h-4z" fill="#3b8ed0"/>
<path d="M596.500 824.300h11.500v19.500h-15.500v-15.500z" fill="#fff" stroke="#3b8ed0" stroke-width=".9"/><path d="M596.500 824.300v4h-4z" fill="#3b8ed0"/>
<rect x="599" y="828" width="6" height="1.400" fill="#39b54a"/><path d="M594.500 832h11M594.500 834.500h11M594.500 837h11M594.500 839.500h11" stroke="#c4c4c4" stroke-width="1"/>
<!-- print -->
<rect x="590.500" y="858.500" width="14" height="8" fill="#e8e8e8" stroke="#4d4d4d" stroke-width="1"/><path d="M592.500 861h10M592.500 863h7" stroke="#808080" stroke-width="1"/>
<rect x="585" y="864.500" width="24.300" height="13" rx="1.500" fill="#29abe2"/><circle cx="606" cy="867.300" r=".9" fill="#fff"/>
<rect x="590.500" y="873.500" width="14" height="7.500" fill="#fff" stroke="#4d4d4d" stroke-width="1.200"/>
<!-- preview -->
<path d="M725.500 858.500h15v23h-19v-19z" fill="#fff" stroke="#bdbdbd" stroke-width=".9"/><path d="M725.500 858.500v4.200h-4z" fill="#e4e4e4" stroke="#bdbdbd" stroke-width=".7"/>
<circle cx="738.600" cy="873" r="3.800" fill="#fff" stroke="#1b75bb" stroke-width="2.200"/><path d="M741.300 876l3.400 4.700" stroke="#1b75bb" stroke-width="2.400" stroke-linecap="round"/>
<!-- delete -->
<rect x="857" y="858" width="24" height="24" fill="#999"/>
<path d="M863 865.500h12l-1 13h-10z" fill="#c8c8c8"/><rect x="862" y="863.300" width="14" height="1.600" fill="#c8c8c8"/><rect x="866.500" y="861.800" width="5" height="1.500" fill="#c8c8c8"/><path d="M866.300 867v10M869 867v10M871.700 867v10" stroke="#999" stroke-width=".9"/>
<!-- edit -->
<path d="M997.500 858.500h15v23h-19v-19z" fill="#dedede" stroke="#d8d8d8" stroke-width=".9"/><path d="M997.500 858.500v4.200h-4z" fill="#d0d0d0"/>
<path d="M1013 861.500l3.500 2.500-13 14.500-4.500 2 1-4.500z" fill="#bdbdbd"/>
<!-- new -->
<path d="M1133.500 859.800h14v21.700h-18v-17.500z" fill="#fff" stroke="#bdbdbd" stroke-width=".9"/><path d="M1133.500 859.800v4.200h-4z" fill="#e4e4e4" stroke="#bdbdbd" stroke-width=".7"/>
<path d="M1146 868l2.100 4.500 4.900.6-3.600 3.300.9 4.800-4.300-2.400-4.300 2.400.9-4.800-3.600-3.300 4.900-.6z" fill="#f7ec13"/>
<!-- add -->
<path d="M1269.500 858.800h14v22.700h-18v-18.500z" fill="#fff" stroke="#bdbdbd" stroke-width=".9"/><path d="M1269.500 858.800v4.200h-4z" fill="#e4e4e4" stroke="#bdbdbd" stroke-width=".7"/>
<path d="M1282.400 869.800v12M1276 875.800h12.800" stroke="#8cc63f" stroke-width="2.800"/>
<!-- close -->
<circle cx="325" cy="870" r="11.800" fill="#c8202f"/><path d="M319.500 864.500l11 11M330.500 864.500l-11 11" stroke="#fff" stroke-width="3.600"/>
</svg>

</body>
</html>
